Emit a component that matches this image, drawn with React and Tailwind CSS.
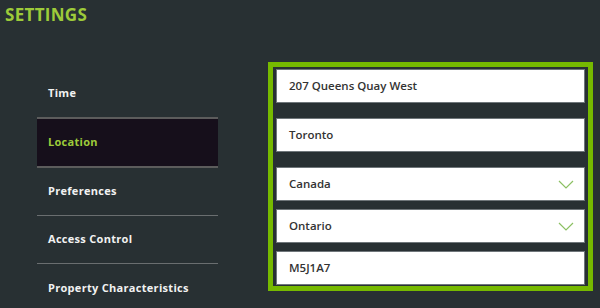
import React from 'react';

const menu = [
  { label: 'Time' },
  { label: 'Location', active: true },
  { label: 'Preferences', line: true },
  { label: 'Access Control', line: true },
  { label: 'Property Characteristics' },
];

const Chevron = () => (
  <svg width="16" height="9" viewBox="0 0 16 9" fill="none">
    <path d="M1 1l7 7 7-7" stroke="#8cc063" strokeWidth="1.2" />
  </svg>
);

const Field = ({ value, select }) => (
  <div className="h-[34px] bg-white border border-[#6f767a] flex items-center justify-between pl-[12px] pr-[10px]">
    <span className="text-[11.5px] font-semibold text-[#333]">{value}</span>
    {select && <Chevron />}
  </div>
);

const App = () => {
  return (
    <div
      className="w-[600px] h-[308px] bg-[#283033] overflow-hidden"
      style={{ fontFamily: '"Open Sans", "Noto Sans", sans-serif' }}
    >
      {/* Titre */}
      <div className="h-[62px] pl-[5px] pt-[5px]">
        <h1 className="text-[17px] leading-[20px] font-bold text-[#9dcb3a] tracking-[0.3px]">SETTINGS</h1>
      </div>

      <div className="flex items-start">
        {/* Menu */}
        <ul className="ml-[37px] w-[181px] mt-[7px]">
          {menu.map((item) => (
            <li
              key={item.label}
              className={
                item.active
                  ? 'h-[51px] flex items-center pl-[11px] bg-[#160f1b] border-y-2 border-[#5c5c5c] text-[#9dcb3a]'
                  : item.line
                  ? 'h-[48px] flex items-center pl-[11px] border-b border-[#6a6e70] text-[#f2f2f2]'
                  : 'h-[48px] flex items-center pl-[11px] text-[#f2f2f2]'
              }
            >
              <span className="text-[11px] font-bold tracking-[0.3px]">{item.label}</span>
            </li>
          ))}
        </ul>

        {/* Formulaire */}
        <div className="ml-[50px] w-[325px] h-[229px] border-[5px] border-[#76b900] px-[3px] pt-[2px] flex flex-col">
          <Field value="207 Queens Quay West" />
          <div className="mt-[15px]">
            <Field value="Toronto" />
          </div>
          <div className="mt-[15px]">
            <Field value="Canada" select />
          </div>
          <div className="mt-[8px]">
            <Field value="Ontario" select />
          </div>
          <div className="mt-[8px]">
            <Field value="M5J1A7" />
          </div>
        </div>
      </div>
    </div>
  );
};

export default App;
